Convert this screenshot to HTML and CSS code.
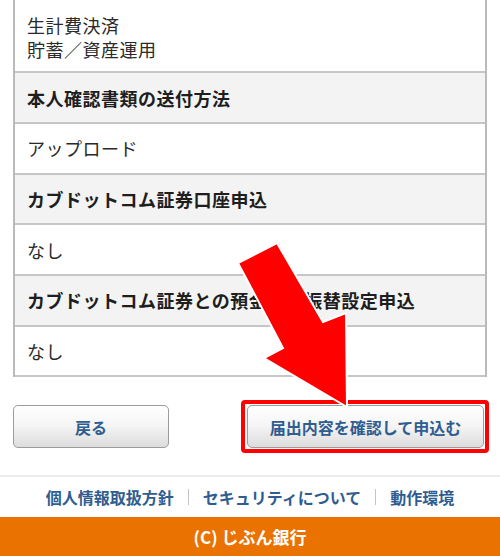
FILE: index.html
```html
<!DOCTYPE html>
<html lang="ja">
<head>
<meta charset="utf-8">
<title>届出内容の確認</title>
<link rel="stylesheet" href="styles.css">
</head>
<body>
<div class="page">
  <div class="table">
    <div class="row val multi">生計費決済<br>貯蓄／資産運用</div>
    <div class="row head">本人確認書類の送付方法</div>
    <div class="row val">アップロード</div>
    <div class="row head">カブドットコム証券口座申込</div>
    <div class="row val">なし</div>
    <div class="row head">カブドットコム証券との預金自動振替設定申込</div>
    <div class="row val">なし</div>
  </div>
  <div class="actions">
    <button class="btn back" type="button">戻る</button>
    <div class="highlight"><button class="btn submit" type="button">届出内容を確認して申込む</button></div>
  </div>
  <nav class="links">
    <a href="#">個人情報取扱方針</a><span class="sep"></span><a href="#">セキュリティについて</a><span class="sep"></span><a href="#">動作環境</a>
  </nav>
  <footer class="copy">(C) じぶん銀行</footer>
  <svg class="arrow" width="500" height="556" viewBox="0 0 500 556" aria-hidden="true">
    <polygon points="238,263 277,243 323,322 346,313 347,407 264,358 283,348" fill="#ff0000" stroke="#ffffff" stroke-width="2" stroke-linejoin="miter"/>
  </svg>
</div>
</body>
</html>
```

FILE: styles.css
```css
html, body {
  margin: 0;
  padding: 0;
  background: #ffffff;
}

body {
  font-family: "Noto Sans CJK JP", "Noto Sans", sans-serif;
  color: #222222;
}

.page {
  position: relative;
  width: 500px;
  height: 556px;
  overflow: hidden;
}

.table {
  margin: 0 13px;
  border-left: 2px solid #bababa;
  border-right: 2px solid #bababa;
}

.row {
  box-sizing: border-box;
  height: 50.7px;
  display: flex;
  align-items: center;
  padding: 0 12px;
  border-bottom: 2px solid #c6c6c6;
  font-size: 18px;
  letter-spacing: 0.5px;
  white-space: nowrap;
}

.row.val {
  background: #ffffff;
  color: #2a2a2a;
}

.row.head {
  background: #f3f3f3;
  font-weight: 700;
  color: #1e1e1e;
}

.row.multi {
  display: block;
  height: 73.3px;
  padding-top: 13px;
  line-height: 24px;
}

.actions {
  display: flex;
  justify-content: space-between;
  align-items: flex-start;
  margin-top: 28px;
  padding: 0 16px 0 13px;
  height: 43px;
}

.btn {
  box-sizing: border-box;
  height: 43px;
  margin: 0;
  padding: 0;
  border: 1px solid #9c9c9c;
  border-radius: 5px;
  background: linear-gradient(#ffffff 0%, #f4f4f4 50%, #dcdcdc 100%);
  font-family: "Noto Sans CJK JP", "Noto Sans", sans-serif;
  font-size: 16px;
  font-weight: 700;
  color: #2f5d91;
}

.btn.back {
  width: 156px;
}

.btn.submit {
  width: 237px;
  display: block;
}

.highlight {
  position: relative;
}

.highlight::after {
  content: "";
  position: absolute;
  left: -6px;
  top: -5px;
  right: -5px;
  bottom: -5px;
  border: 4px solid #ff0000;
  border-radius: 4px;
}

.links {
  margin-top: 27px;
  border-top: 2px solid #ececec;
  height: 40px;
  display: flex;
  align-items: center;
  justify-content: center;
  font-size: 16px;
  font-weight: 700;
}

.links a {
  color: #2f5d91;
  text-decoration: none;
}

.sep {
  width: 1px;
  height: 16px;
  background: #c4c4c4;
  margin: 0 14px;
}

.copy {
  height: 39px;
  background: #ea7200;
  color: #ffffff;
  display: flex;
  align-items: center;
  justify-content: center;
  font-size: 17px;
  font-weight: 700;
}

.arrow {
  position: absolute;
  left: 0;
  top: 0;
  pointer-events: none;
}
```
